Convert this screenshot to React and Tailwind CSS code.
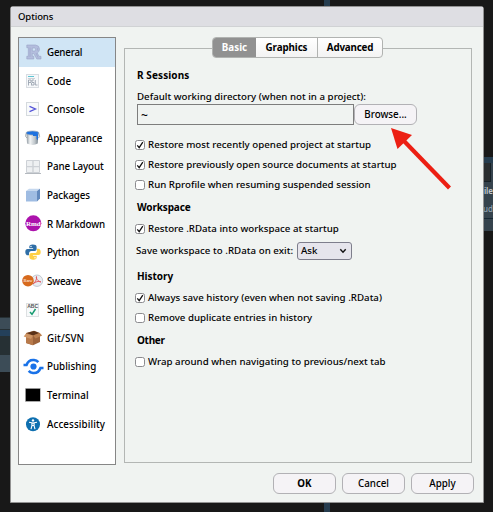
import React from "react";

const icons = {
  General: (
    <svg width="16" height="16" viewBox="0 0 16 16" className="ml-[7px]">
      <path d="M.8 1H9.5Q13.5 1.4 13.5 5.2Q13.5 7.8 11.3 9L13 12.3H15V15H10.8L7.7 9.5H6.3V12.3H7.8V15H.8V12.3H2.3V3.7H.8ZM6.3 4V7H8.5Q9.6 6.8 9.6 5.5Q9.6 4.2 8.5 4Z" fill="#b3bddd" stroke="#98a3c6" strokeWidth="0.6" fillRule="evenodd" />
      <path d="M4 3.5V13M10 9L12 13.5M11.6 4V6.5" fill="none" stroke="#8b98be" strokeWidth=".8" opacity=".5" />
    </svg>
  ),
  Code: (
    <svg width="14" height="14" viewBox="0 0 14 14" className="ml-[7px]">
      <rect x="0.5" y="0.5" width="12" height="13" fill="#f6f8fa" stroke="#d9dde2" />
      <path d="M2 2.5H8" stroke="#5fc5d4" />
      <path d="M2 4.5H9" stroke="#b9c0c6" strokeWidth=".7" />
      <path d="M2.5 6V11.5M2.5 6H5V8.5H2.5M5.5 11.5V9M8 6H6V8.5H8V11H6M9.3 6V11H11.5" className="stroke-[#9ba4b0]" strokeWidth="0.9" fill="none" />
    </svg>
  ),
  Console: (
    <svg width="14" height="14" viewBox="0 0 14 14" className="ml-[7px]">
      <rect x="0.5" y="0.5" width="12" height="13" fill="#f8fafb" stroke="#d5dade" />
      <path d="M3.5 4.3L9.5 7L3.5 9.7" fill="none" stroke="#5353d8" strokeWidth="1.3" />
    </svg>
  ),
  Appearance: (
    <svg width="16" height="16" viewBox="0 0 16 16" className="ml-[6px]">
      <defs>
        <linearGradient id="pail"><stop stopColor="#8d979f" /><stop offset=".3" stopColor="#f3f5f6" /><stop offset=".7" stopColor="#bdc4c9" /><stop offset="1" stopColor="#727e87" /></linearGradient>
      </defs>
      <path d="M1.5 3L2 13.5Q8 16.3 12.7 13.5L13.5 3Z" fill="url(#pail)" />
      <ellipse cx="7.5" cy="3" rx="6.5" ry="2" fill="#1e72e0" stroke="#98a6b5" strokeWidth=".7" />
      <path d="M8 4H13V9.5Q12 10.5 11.5 8.5V6H8Z" fill="#1e72e0" />
      <path d="M1 3.5Q-.5 7 2 8M14 3.5Q15.5 7 13.5 8" stroke="#879098" strokeWidth=".7" fill="none" />
    </svg>
  ),
  "Pane Layout": (
    <svg width="18" height="16" viewBox="0 0 18 16" className="ml-[5px]">
      <rect x="2" y="1" width="14" height="13" rx="1" fill="#cdd1d6" />
      <path d="M3 2H8.3V7H3ZM9.7 2H15V7H9.7ZM3 8.3H8.3V13H3ZM9.7 8.3H15V13H9.7Z" fill="#eef0f2" />
      <path d="M1 14.5H17" stroke="#b4b9bf" />
    </svg>
  ),
  Packages: (
    <svg width="16" height="14" viewBox="0 0 16 14" className="ml-[6px]">
      <path d="M1 3L4 .8H15L12 3Z" fill="#c5d8ef" />
      <path d="M1 3H12V13.5H1Z" fill="#9fbce2" />
      <path d="M12 3L15 .8V10.5L12 13.5Z" fill="#6289bd" />
    </svg>
  ),
  "R Markdown": (
    <svg width="17" height="17" viewBox="0 0 17 17" className="ml-[6px]">
      <circle cx="8.3" cy="8.3" r="8" fill="#ac12ac" />
      <text x="8.3" y="10.5" textAnchor="middle" fontFamily="Liberation Serif, serif" fontWeight="bold" fontSize="7" fill="#fff">Rmd</text>
    </svg>
  ),
  Python: (
    <svg width="16" height="16" viewBox="0 0 16 16" className="ml-[6px]">
      <path d="M7.8.4C5 .4 4.3 1.5 4.3 2.8V4.3H8.1V5H2.7C1 5 .3 6.3.3 8.1C.3 10 1.1 11.3 2.6 11.3H4V9.4C4 8 5 7 6.3 7H9.7C10.8 7 11.6 6.1 11.6 5V2.8C11.6 1.2 10.1.4 7.8.4Z" fill="#2f6ea6" />
      <path d="M8.2 15.7C11 15.7 11.7 14.6 11.7 13.3V11.8H7.9V11H13.3C15 11 15.7 9.8 15.7 8C15.7 6.1 14.9 4.8 13.4 4.8H12V6.7C12 8.1 11 9.1 9.7 9.1H6.3C5.2 9.1 4.4 10 4.4 11.1V13.3C4.4 14.9 5.9 15.7 8.2 15.7Z" fill="#ffd044" />
      <circle cx="6" cy="2.5" r=".7" fill="#fff" /><circle cx="10" cy="13.7" r=".7" fill="#fff" />
    </svg>
  ),
  Sweave: (
    <svg width="22" height="14" viewBox="0 0 22 14" className="ml-[3px]">
      <circle cx="15" cy="6.7" r="5.7" fill="#e9edf2" stroke="#b6bcc7" strokeWidth=".8" />
      <path d="M11 10C14 8 15 4 14.5 2.5C13.5 3.5 16 8 19 8C17 6.5 13 8 11 10Z" fill="none" stroke="#e0525a" strokeWidth=".9" />
      <circle cx="6" cy="6.7" r="5.8" fill="#d76a1d" />
      <text x="6" y="8.3" textAnchor="middle" fontFamily="Liberation Serif, serif" fontWeight="bold" fontSize="4.4" fill="#f7ddc7">Rnw</text>
    </svg>
  ),
  Spelling: (
    <svg width="14" height="14" viewBox="0 0 14 14" className="ml-[7px]">
      <rect x="0.5" y="0.5" width="12" height="13" fill="#f7f9fa" stroke="#dde0e2" />
      <text x="6.6" y="5" textAnchor="middle" fontFamily="Liberation Sans, sans-serif" fontWeight="bold" fontSize="5" fill="#555">ABC</text>
      <path d="M4 9L6 11.3L9.5 6" fill="none" stroke="#159b70" strokeWidth="1.5" />
    </svg>
  ),
  "Git/SVN": (
    <svg width="20" height="16" viewBox="0 0 20 16" className="ml-[4px]">
      <path d="M3 3L11 .8L17 3V12L10 15.3L3 13Z" fill="#9d633a" />
      <path d="M3 4L10 6V15.3L3 13Z" fill="#b87a4b" />
      <path d="M4 3L11 1L16 3L10 5.5Z" fill="#5b3218" />
      <path d="M3 3.5L10 5.6L8 9L.7 6.5Z" fill="#ce9564" />
      <path d="M10 5.6L16.8 3L19.2 5.5L12.5 8.5Z" fill="#bb7f4e" />
    </svg>
  ),
  Publishing: (
    <svg width="22" height="17" viewBox="0 0 22 17" className="ml-[4px]">
      <circle cx="10.5" cy="8.5" r="3.1" fill="#1972e8" />
      <path d="M.5 7H3.5C5 3 8 1.7 11 2C13 2.2 14.3 3 15.3 4.2M20.5 10H17.5C16 14 13 15.3 10 15C8 14.8 6.7 14 5.7 12.8" fill="none" stroke="#1972e8" strokeWidth="2.6" />
    </svg>
  ),
  Terminal: (
    <svg width="16" height="14" viewBox="0 0 16 14" className="ml-[6px]">
      <rect x=".3" y=".3" width="15" height="13.2" fill="#000" stroke="#c5c5c5" strokeWidth=".6" />
    </svg>
  ),
  Accessibility: (
    <svg width="15" height="15" viewBox="0 0 15 15" className="ml-[7px]">
      <circle cx="7" cy="7.3" r="7" fill="#0f70b0" />
      <circle cx="7" cy="3.4" r="1.2" fill="#fff" />
      <path d="M3 5.3L7 6L11 5.3M5.9 6.2H8.1V8.5H5.9ZM6 8.3L5 12.2M8 8.3L9 12.2" fill="none" stroke="#fff" strokeWidth="1.1" />
    </svg>
  ),
};

const nav = [
  ["General", "tracking-[-0.2px]"],
  ["Code", "tracking-[0.05px]"],
  ["Console", "tracking-[0.05px]"],
  ["Appearance", "tracking-[-0.07px]"],
  ["Pane Layout", "tracking-[-0.1px]"],
  ["Packages", "tracking-[-0.12px]"],
  ["R Markdown", "tracking-[-0.07px]"],
  ["Python", "tracking-[-0.15px]"],
  ["Sweave", "tracking-[-0.2px]"],
  ["Spelling", "tracking-[0px]"],
  ["Git/SVN", "tracking-[0.15px]"],
  ["Publishing", "tracking-[0px]"],
  ["Terminal", "tracking-[0.1px]"],
  ["Accessibility", "tracking-[0.1px]"],
];

function Check({ on, children, className = "" }) {
  return (
    <label className={"flex h-5 items-center pl-[10px] whitespace-nowrap text-[9.7px] tracking-[0.02px] " + className}>
      <span className="mr-[3px] flex size-[10px] shrink-0 items-center justify-center rounded-[2.5px] border border-[#8b8b8f] bg-white">
        {on && (
          <svg width="8" height="8" viewBox="0 0 8 8" className="shrink-0">
            <path d="M1.3 4.3L3.2 6.6L6.8 1.2" fill="none" stroke="#111" strokeWidth="1.3" />
          </svg>
        )}
      </span>
      <span className="pt-px">{children}</span>
    </label>
  );
}

function Heading({ children, className }) {
  return <h2 className={"pl-3 font-bold leading-4 " + className}>{children}</h2>;
}

function Button({ children, className = "" }) {
  return (
    <button className={"h-[21px] w-[63px] shrink-0 rounded-[6px] border border-[#b2b1b5] bg-[#f5f3f6] text-[9.8px] leading-[18px] " + className}>
      {children}
    </button>
  );
}

export default function App() {
  return (
    <div className="relative h-[512px] w-[493px] overflow-hidden bg-[#181818] font-['Noto_Sans',sans-serif] text-[10px] font-medium text-black">
      <div className="absolute left-[324px] top-0 h-full w-[6px] bg-[#263d4f]" />
      <div className="absolute left-0 top-[317px] flex h-[55px] w-3 flex-col bg-[#263034]">
        <div className="mt-px h-[11px] bg-[#3c4c57]" />
        <div className="mt-px h-[6px] bg-[#24405a]" />
        <div className="mt-[19px] h-[17px] bg-[#3c4c57]" />
      </div>
      <div className="absolute left-[483px] top-[157px] h-[74px] w-[10px] bg-[#35434d] text-[8px] leading-[18px] text-[#c4cbd0]">
        <div className="h-[6px] bg-[#263d4f]" />
        <div className="h-[19px] w-[8px] border-b border-r border-[#162128] bg-[#2a2e30]" />
        <div className="pl-px font-semibold tracking-[-0.2px]">ile</div>
        <div className="text-[#8fa2b0]">ud</div>
        <div className="h-px bg-[#162733]" />
      </div>

      <div className="absolute left-[10px] top-[6px] flex h-[497px] w-[474px] flex-col rounded-t-[3px] border border-[#929292] bg-[#f0f3f1]">
        <header className="h-5 shrink-0 border-b border-[#d0d2d4] bg-[#dedee3] pl-[7px] text-[9.5px] leading-[20px] tracking-[-0.1px]">Options</header>
        <div className="flex pl-[7px] pt-[10px]">
          <nav className="h-[428px] w-[98px] shrink-0 border border-[#868686] bg-white text-[9.8px]">
            {nav.map(([name, track], i) => (
              <div key={name} className={"flex h-[28.6px] items-center " + (i === 0 ? "bg-[#d0e5f5]" : "")}>
                <div className="flex w-7 shrink-0">{icons[name]}</div>
                <span className={"whitespace-nowrap pt-[2px] " + track}>{name}</span>
              </div>
            ))}
          </nav>
          <main className="ml-2 flex w-[348px] flex-col">
            <div className="relative z-10 ml-[88px] flex h-[21px] w-[171px] shrink-0 overflow-hidden rounded-[4px] border border-[#b1b3b1] bg-gradient-to-b from-white to-[#f3f3f3] text-center text-[9.8px] font-bold leading-[19px]">
              <div className="w-[43px] bg-[#919191] text-white">Basic</div>
              <div className="w-[62px] border-r border-[#b1b3b1] tracking-[-0.1px]">Graphics</div>
              <div className="w-[64px] tracking-[-0.2px]">Advanced</div>
            </div>
            <section className="-mt-[10px] flex h-[415px] flex-col border border-[#b3b6b4]">
              <Heading className="mt-[18px] tracking-[0.1px]">R Sessions</Heading>
              <div className="mt-[5px] h-4 pl-3 text-[9.7px] leading-[17px] whitespace-nowrap tracking-[0.02px]">Default working directory (when not in a project):</div>
              <div className="flex pl-3">
                <div className="h-[21px] w-[217px] border border-[#7d7d7d] pl-[3px] text-[12px] leading-[22px]">~</div>
                <Button>Browse...</Button>
              </div>
              <Check on className="mt-[10px]">Restore most recently opened project at startup</Check>
              <Check on>Restore previously open source documents at startup</Check>
              <Check>Run Rprofile when resuming suspended session</Check>
              <Heading className="mt-1 tracking-[-0.15px]">Workspace</Heading>
              <Check on className="mt-1">Restore .RData into workspace at startup</Check>
              <div className="mt-[3px] flex h-[18px] items-center whitespace-nowrap pl-[11px] text-[9.7px]">
                <span className="w-[161px] tracking-[0.04px]">Save workspace to .RData on exit:</span>
                <div className="flex h-[18px] w-[55px] items-center justify-between rounded-[3px] border border-[#7e7e8c] bg-[#e6e5ec] pl-[3px] pr-[4px]">
                  <span className="pb-px leading-[14px]">Ask</span>
                  <svg width="8" height="6" viewBox="0 0 8 6"><path d="M1.3 1.2L4 4.2L6.7 1.2" fill="none" stroke="#111" strokeWidth="1.4" /></svg>
                </div>
              </div>
              <Heading className="mt-2 tracking-[-0.05px]">History</Heading>
              <Check on className="mt-1">Always save history (even when not saving .RData)</Check>
              <Check>Remove duplicate entries in history</Check>
              <Heading className="mt-1 tracking-[-0.3px]">Other</Heading>
              <Check className="mt-1">Wrap around when navigating to previous/next tab</Check>
            </section>
          </main>
        </div>
        <footer className="mt-[8px] flex justify-end gap-[6px] pr-[9px]">
          <Button className="font-bold">OK</Button>
          <Button>Cancel</Button>
          <Button>Apply</Button>
        </footer>
      </div>

      <svg className="absolute left-[386px] top-[122px]" width="70" height="72" viewBox="0 0 70 72">
        <path d="M63.5 66L18 19" stroke="#ec1f13" strokeWidth="4.2" />
        <path d="M5 6L26 13L11.5 27Z" fill="#ec1f13" />
      </svg>
    </div>
  );
}
